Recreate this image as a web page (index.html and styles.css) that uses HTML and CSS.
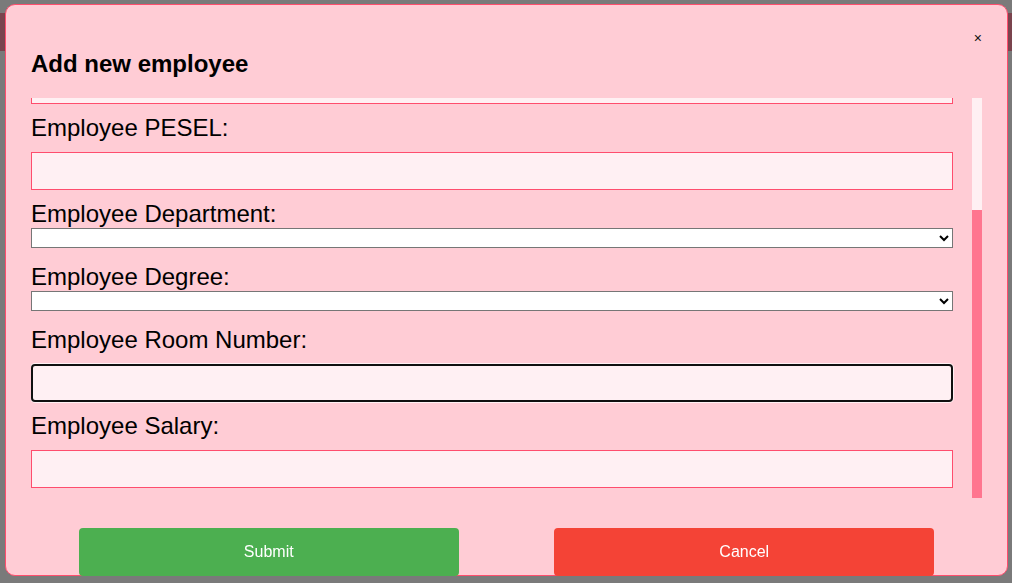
FILE: index.html
```html
<!DOCTYPE html>
<html lang="en">
<head>
<meta charset="utf-8">
<title>Add new employee</title>
<link rel="stylesheet" href="styles.css">
</head>
<body>
<header class="page-header"></header>
<div class="overlay">
  <div class="modal">
    <button class="close-btn" type="button">×</button>
    <h2 class="modal-title">Add new employee</h2>
    <div class="scroll-frame">
      <div class="scroll-area">
        <form class="form">
          <label class="field-label">Employee Name:</label>
          <input class="field-input" type="text">
          <label class="field-label">Employee Surname:</label>
          <input class="field-input" type="text">
          <label class="field-label">Employee PESEL:</label>
          <input class="field-input" type="text">
          <label class="field-label">Employee Department:</label>
          <select class="field-select"><option></option></select>
          <label class="field-label">Employee Degree:</label>
          <select class="field-select"><option></option></select>
          <label class="field-label">Employee Room Number:</label>
          <input class="field-input is-focused" type="text">
          <label class="field-label">Employee Salary:</label>
          <input class="field-input" type="text">
        </form>
      </div>
      <div class="scrollbar"><div class="scrollbar-thumb"></div></div>
    </div>
    <div class="actions">
      <button class="btn btn-submit" type="button">Submit</button>
      <button class="btn btn-cancel" type="button">Cancel</button>
    </div>
  </div>
</div>
</body>
</html>
```
FILE: styles.css
```css
html, body {
  margin: 0;
  padding: 0;
  background: #ffffff;
  font-family: "Liberation Sans", Arial, sans-serif;
}

.page-header {
  margin-top: 13px;
  height: 38px;
  background: #ff8fa3;
}

.overlay {
  position: fixed;
  inset: 0;
  background: rgba(0, 0, 0, 0.52);
  display: flex;
  align-items: flex-start;
  padding: 4px 4px 0 5px;
}

.modal {
  position: relative;
  box-sizing: border-box;
  width: 1003px;
  height: 572px;
  background: #ffccd5;
  border: 1px solid #ff4d6d;
  border-radius: 10px;
  padding: 25px 25px 0 25px;
  display: flex;
  flex-direction: column;
}

.close-btn {
  position: absolute;
  top: 25px;
  right: 25px;
  background: none;
  border: none;
  padding: 0;
  font-family: "Liberation Sans", Arial, sans-serif;
  font-size: 14px;
  line-height: 16px;
  color: #111;
  cursor: pointer;
}

.modal-title {
  margin: 20px 0;
  font-size: 24px;
  font-weight: bold;
  color: #000;
}

.scroll-frame {
  height: 400px;
  flex: none;
  display: flex;
}

.scroll-area {
  flex: 1;
  min-width: 0;
  overflow: hidden;
  scrollbar-width: none;
  display: flex;
  flex-direction: column-reverse;
}

.scrollbar {
  width: 10px;
  flex: none;
  background: #fff0f3;
  display: flex;
  flex-direction: column-reverse;
}

.scrollbar-thumb {
  height: 72%;
  background: #ff758f;
}

.form {
  display: flex;
  flex-direction: column;
  align-items: flex-start;
  flex: none;
  margin: 0;
}

.field-label {
  display: block;
  font-size: 24px;
  color: #000;
}

.field-input {
  box-sizing: border-box;
  width: 98%;
  height: 38px;
  margin: 10px 0;
  background: #fff0f3;
  border: 1px solid #ff4d6d;
  padding: 0 8px;
  font-size: 16px;
}

.field-input.is-focused {
  border: 2px solid #101010;
  border-radius: 4px;
  box-shadow: 0 0 0 1px rgba(255, 255, 255, 0.7);
  outline: none;
}

.field-select {
  width: 98%;
  height: 20px;
  margin: 0 0 15px 0;
  background: #fff;
}

.actions {
  margin-top: 30px;
  display: flex;
  justify-content: space-around;
  flex: none;
}

.btn {
  width: 40%;
  border: none;
  border-radius: 4px;
  padding: 15px 0;
  font-family: "Liberation Sans", Arial, sans-serif;
  font-size: 16px;
  line-height: normal;
  color: #fff;
  cursor: pointer;
}

.btn-submit {
  background: #4caf50;
}

.btn-cancel {
  background: #f44336;
}
```
